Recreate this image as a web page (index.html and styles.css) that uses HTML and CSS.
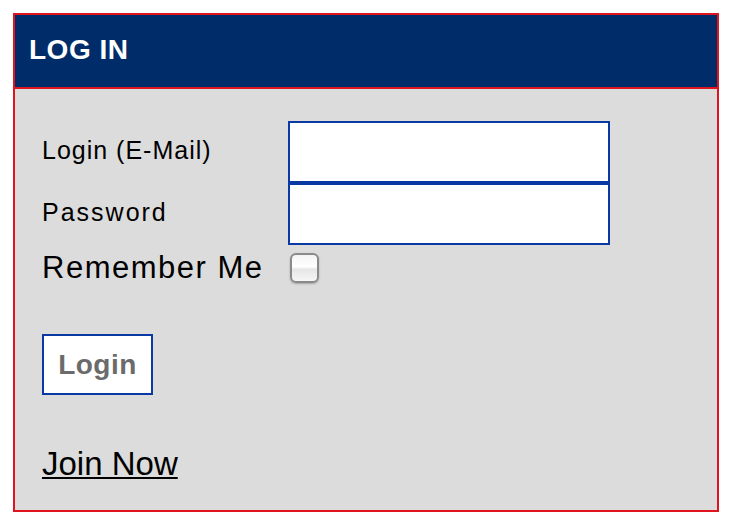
FILE: index.html
```html
<!DOCTYPE html>
<html>
<head>
<meta charset="utf-8">
<link rel="stylesheet" href="styles.css">
</head>
<body>
<div class="panel">
  <div class="panel-head">LOG IN</div>
  <div class="panel-body">
    <form class="login-form">
      <label class="lbl" for="email">Login (E-Mail)</label>
      <input class="field" id="email" type="text">
      <label class="lbl lbl-wide" for="pw">Password</label>
      <input class="field" id="pw" type="password">
      <label class="lbl lbl-big" for="rem">Remember Me</label>
      <div class="check-cell"><input class="check" id="rem" type="checkbox"></div>
    </form>
    <button class="btn" type="button">Login</button>
    <a class="join" href="#">Join Now</a>
  </div>
</div>
</body>
</html>
```
FILE: styles.css
```css
html, body {
  margin: 0;
  padding: 0;
  background: #ffffff;
}
body {
  padding: 13px 0 0 13px;
  font-family: "Liberation Sans", Arial, sans-serif;
}
.panel {
  width: 702px;
  border: 2px solid #e0141e;
  background: #dcdcdc;
}
.panel-head {
  height: 74px;
  box-sizing: border-box;
  background: #002d69;
  border-bottom: 2px solid #e0141e;
  color: #ffffff;
  font-weight: bold;
  font-size: 28px;
  letter-spacing: 0.5px;
  display: flex;
  align-items: center;
  padding: 0 0 3px 14px;
}
.panel-body {
  padding: 32px 0 0 27px;
  height: 421px;
  box-sizing: border-box;
  display: flex;
  flex-direction: column;
  align-items: flex-start;
}
.login-form {
  display: grid;
  grid-template-columns: 246px 322px;
  grid-template-rows: 62px 62px 38px;
  align-items: center;
}
.lbl {
  font-size: 25px;
  letter-spacing: 1px;
  color: #000;
  margin-top: -4px;
}
.lbl-wide {
  letter-spacing: 2px;
}
.lbl-big {
  font-size: 31px;
  letter-spacing: 1.5px;
  margin-top: 8px;
}
.field {
  width: 322px;
  height: 62px;
  box-sizing: border-box;
  border: 2px solid #0a39a3;
  background: #fff;
  margin: 0;
  padding: 0 6px;
  outline: none;
}
.check-cell {
  display: flex;
  align-items: center;
  padding-left: 2px;
  margin-top: 8px;
}
.check {
  appearance: none;
  -webkit-appearance: none;
  width: 29px;
  height: 30px;
  margin: 0;
  border: 2px solid #8a8a8a;
  border-radius: 6px;
  background: linear-gradient(#f4f4f4, #ffffff 45%, #e6e6e6 55%, #f6f6f6);
  box-shadow: 0 1px 2px rgba(0,0,0,0.25);
}
.btn {
  margin-top: 51px;
  width: 111px;
  height: 61px;
  box-sizing: border-box;
  border: 2px solid #0a39a3;
  background: #fff;
  color: #6b6b6b;
  font-family: "Liberation Sans", Arial, sans-serif;
  font-weight: bold;
  font-size: 28px;
  letter-spacing: 0.5px;
  padding: 0;
}
.join {
  margin-top: 50px;
  font-size: 33px;
  color: #000;
  text-decoration: underline;
  text-decoration-thickness: 2px;
  text-underline-offset: 2px;
}
```
